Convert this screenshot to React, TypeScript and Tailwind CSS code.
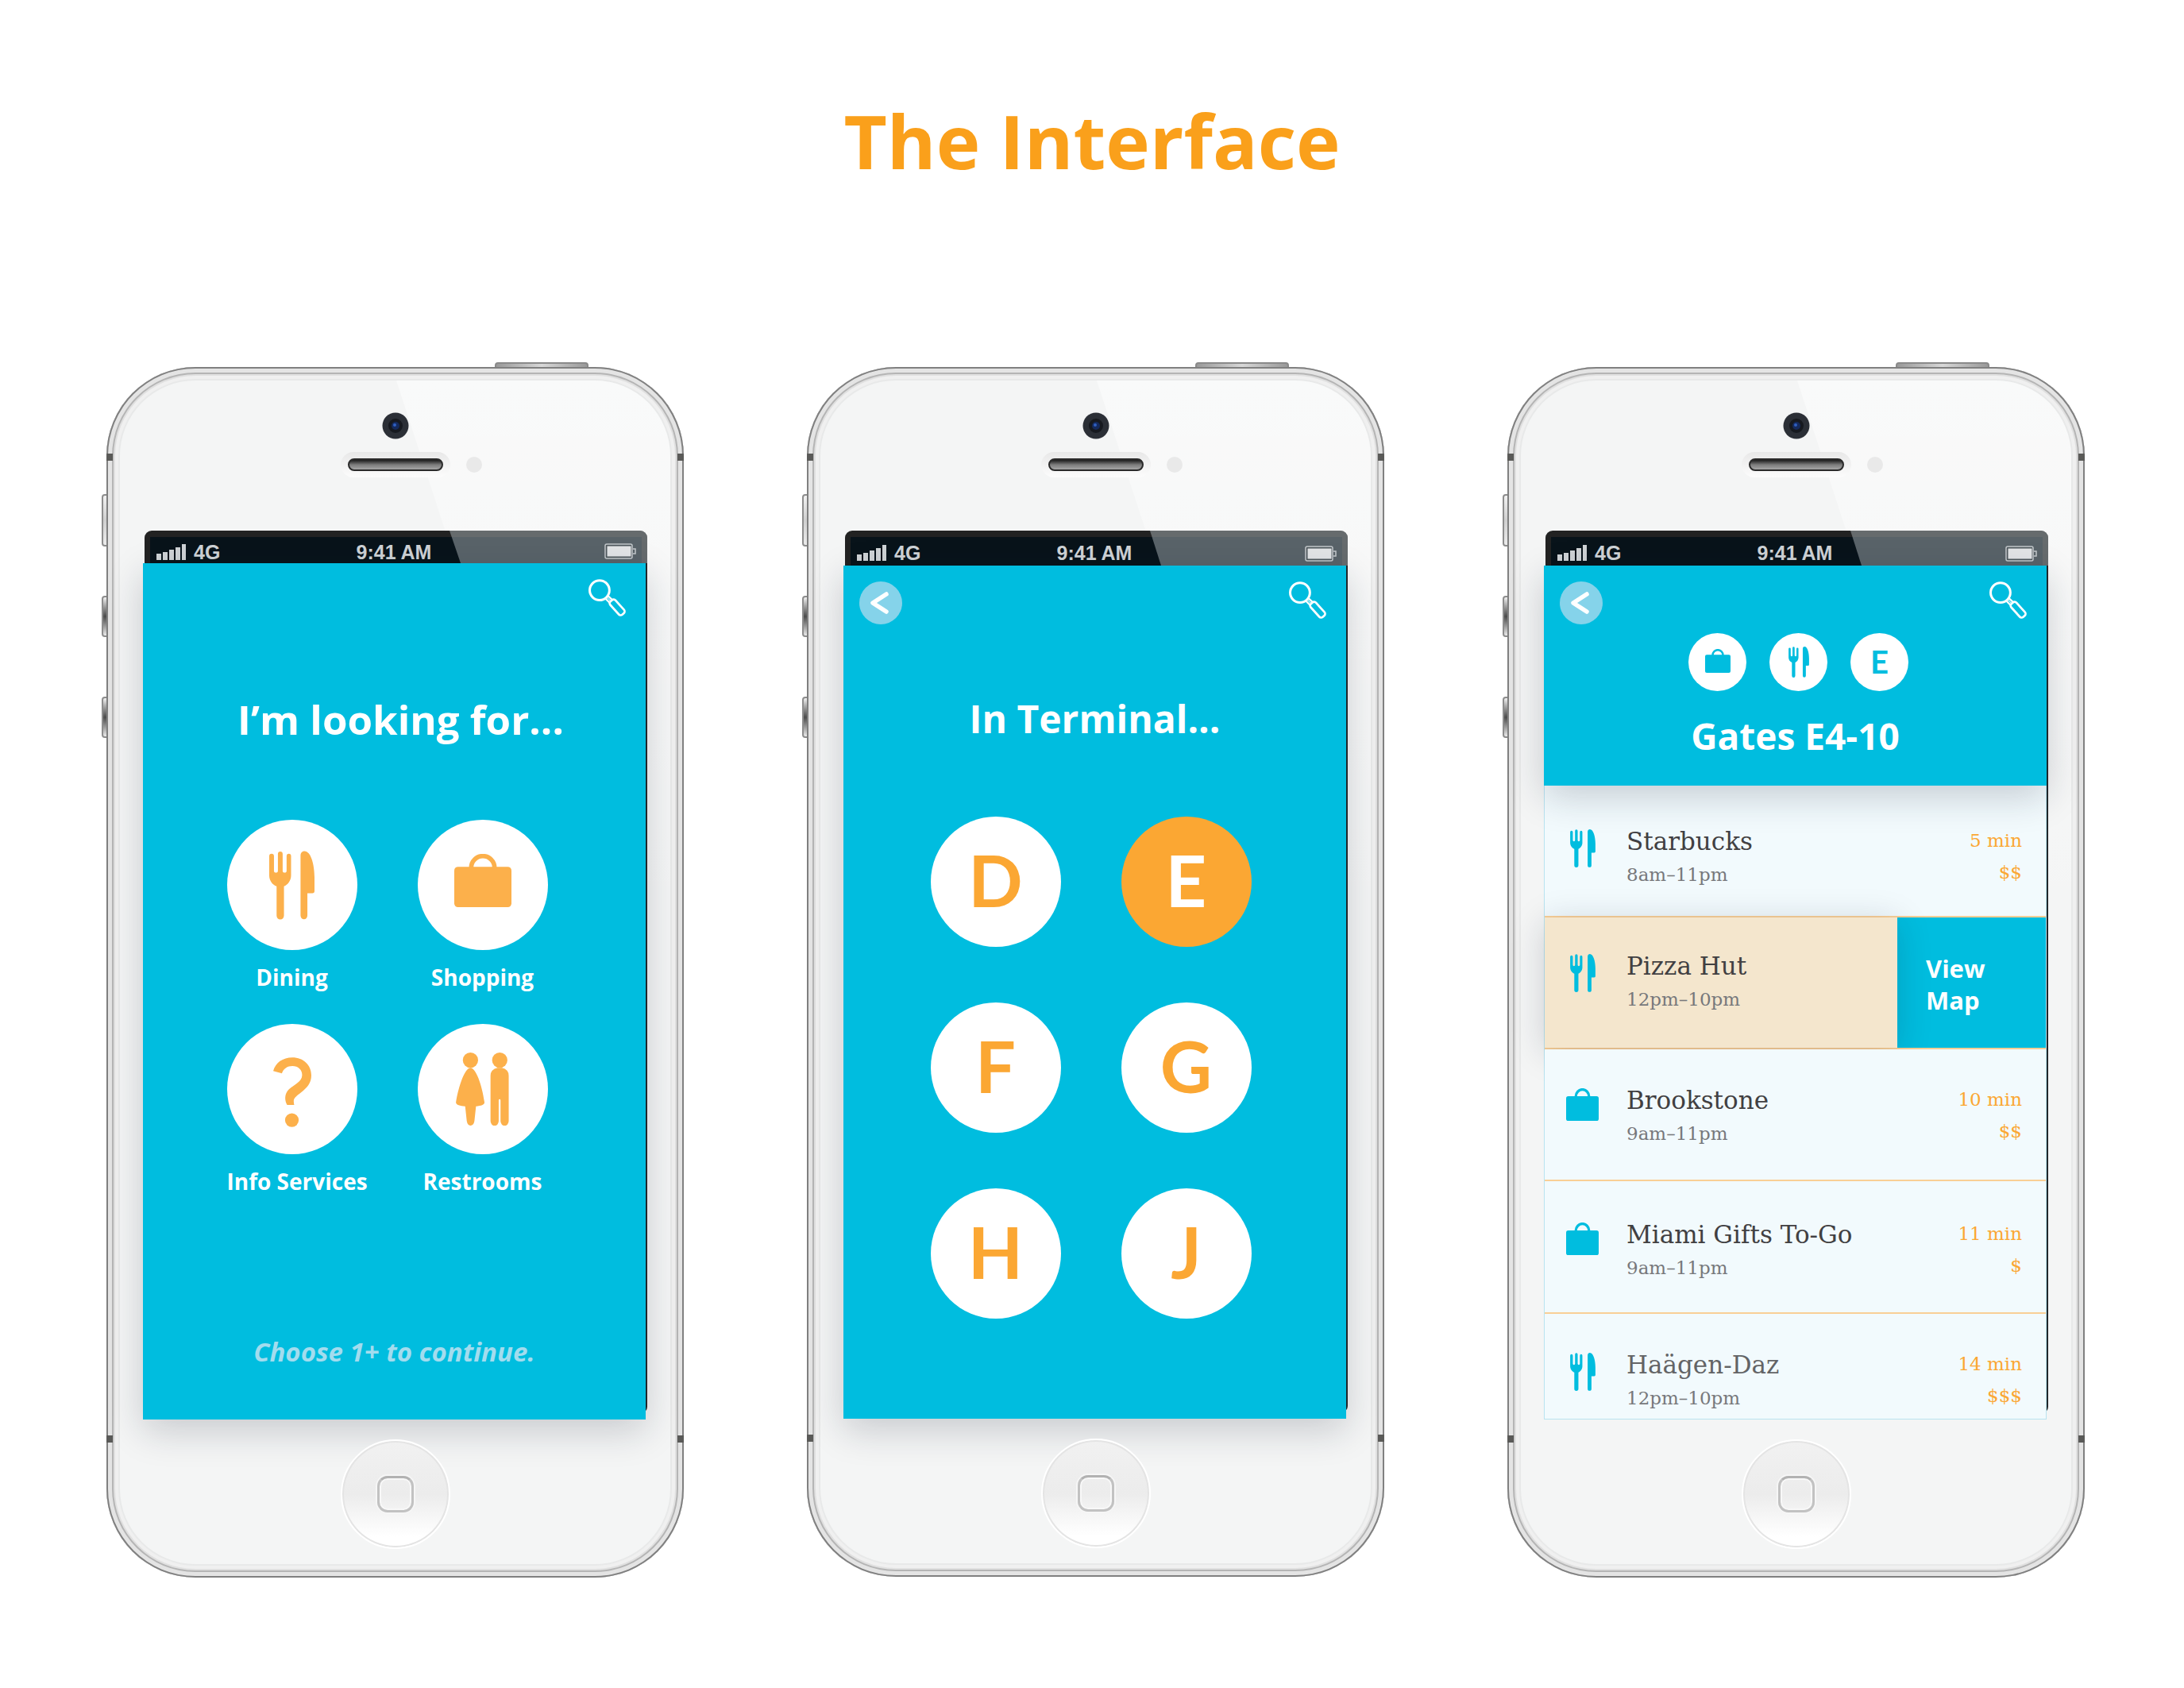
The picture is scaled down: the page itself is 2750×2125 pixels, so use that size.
import type { ReactNode } from "react";

function ForkKnife({ className }: { className: string }) {
  return (
    <svg viewBox="0 0 172 260" fill="currentColor" className={className} aria-hidden="true">
      <path d="M0 19a9 9 0 0 1 18 0V74a7.500 8 0 0 0 15 0V11a9 9 0 0 1 18 0V74a7.500 8 0 0 0 15 0V19a8.500 9 0 0 1 17 0V92C83 112 70 128 56 134V245a14 15 0 0 1-28 0V134C13 128 0 112 0 92Z" />
      <path d="M119 17C119 5 127 0 134 0C158 0 172 50 172 100V152q0 8-8 8H145V245a13 14 0 0 1-26 0Z" />
    </svg>
  );
}

function Bag({ className }: { className: string }) {
  return (
    <svg viewBox="0 0 216 202" preserveAspectRatio="none" className={className} aria-hidden="true">
      <rect y="49" width="216" height="153" rx="14" fill="currentColor" />
      <path d="M64 54V52A44 44 0 0 1 152 52V54" fill="none" stroke="currentColor" strokeWidth="17" />
    </svg>
  );
}

function Question({ className }: { className: string }) {
  return (
    <svg viewBox="0 0 145 264" fill="currentColor" className={className} aria-hidden="true">
      <path d="M0 51C9 20 36 0 73 0C115 0 145 29 145 68C145 96 130 114 106 133C88 147 78 154 78 166Q78 173 80 180H53C43 164 42 138 60 121C82 101 110 91 110 66C110 46 95 32 73 32C54 32 39 42 33 60Z" />
      <circle cx="71" cy="238" r="26" />
    </svg>
  );
}

function People({ className }: { className: string }) {
  return (
    <svg viewBox="0 0 201 277" fill="currentColor" className={className} aria-hidden="true">
      <circle cx="55" cy="29" r="29" />
      <path d="M55 58C76 60 98 120 108 188C109 199 96 202 76 204L70 260Q67 277 55 277Q44 277 41 260L35 204C15 202-1 199 0 188C12 120 34 60 55 58Z" />
      <circle cx="166" cy="29" r="29" />
      <path d="M158 58H174Q200 64 200 88V260a15 17 0 0 1-31 0V181a3.500 4 0 0 0-7 0V260a15 17 0 0 1-31 0V88Q131 64 158 58Z" />
    </svg>
  );
}

function Magnifier() {
  return (
    <svg viewBox="0 0 139 140" fill="none" stroke="white" className="size-[47px]" aria-hidden="true">
      <circle cx="41" cy="42" r="37" strokeWidth="9" />
      <path d="M63 73L80 90M74 64L90 79" strokeWidth="7" />
      <path d="M70 70L84 84" strokeWidth="3" />
      <rect x="74" y="93" width="66" height="26" rx="9" strokeWidth="8" transform="rotate(48 107 106)" />
    </svg>
  );
}

function StatusBar({ heightClass }: { heightClass: string }) {
  return (
    <div className={`relative ml-[2px] flex overflow-hidden rounded-t-[9px] bg-[#222222] px-[7px] pt-[8px] ${heightClass}`}>
      <div className="grid flex-1 grid-cols-3 items-center bg-[#08131a] pt-[4px] pr-[13px] pl-2 font-['Liberation_Sans',sans-serif] text-[25px] leading-6 font-bold text-[#cfd3d6]">
        <div className="flex items-center gap-[10px]">
          <svg viewBox="0 0 37 20" fill="currentColor" className="h-5 w-[37px]" aria-hidden="true">
            <path d="M0 12H6V20H0ZM8 10H14V20H8ZM16 7H22V20H16ZM24 4H30V20H24ZM32 0H37V20H32Z" />
          </svg>
          <span>4G</span>
        </div>
        <span className="text-center">9:41 AM</span>
      </div>
      <div className="absolute inset-y-0 right-0 w-[249px] bg-[#aab3b8]/50 [clip-path:polygon(0_0,100%_0,100%_100%,14px_100%)]" />
      <svg viewBox="0 0 41 20" className="absolute right-[13px] bottom-[5px] h-5 w-[41px]" aria-hidden="true">
        <rect x="1" y="1" width="34" height="18" rx="2" fill="#4f585d" stroke="#c4c9cc" strokeWidth="1.500" />
        <rect x="3.500" y="3.500" width="30" height="13" fill="#e3e5e7" />
        <path d="M36 7H39V13H36" fill="none" stroke="#c4c9cc" strokeWidth="1.500" />
      </svg>
    </div>
  );
}

function SideButton({ className }: { className: string }) {
  return (
    <div
      className={`absolute -left-[6px] w-[8px] rounded-l-[4px] border-2 border-[#8d8d8d] ${className}`}
    />
  );
}

function Phone({ statusClass, children }: { statusClass: string; children: ReactNode }) {
  return (
    <section className="relative">
      <SideButton className="top-[160px] h-[66px] bg-linear-to-b from-[#f2f2f2] via-[#cfcfcf] to-[#ececec]" />
      <SideButton className="top-[288px] h-[52px] bg-linear-to-b from-[#f2f2f2] via-[#4d4d4d] to-[#ececec]" />
      <SideButton className="top-[415px] h-[52px] bg-linear-to-b from-[#f2f2f2] via-[#4d4d4d] to-[#ececec]" />
      <div className="absolute -top-[6px] right-[120px] h-[8px] w-[118px] rounded-t-[4px] border-2 border-[#8a8a8a] bg-linear-to-r from-[#999999] via-[#d8d8d8] to-[#999999]" />

      <div className="relative flex flex-col overflow-hidden rounded-[112px] bg-[#f4f5f5] px-[46px] shadow-[inset_0_0_0_2px_#808080,inset_0_0_0_7px_#e4e4e4,inset_0_0_0_9px_#b5b5b5,inset_0_0_0_11px_#e0e0e0,inset_0_0_0_15px_#f0f0f0,inset_0_0_0_17px_#e8e9e9]">
        <div className="absolute top-[17px] right-[17px] h-[700px] w-[345px] rounded-tr-[95px] bg-linear-to-b from-white/50 to-white/0 [clip-path:polygon(0_0,100%_0,100%_100%,228px_100%)]" />
        <div className="absolute top-[109px] left-0 h-[9px] w-[8px] bg-[#5a5a58]" />
        <div className="absolute top-[109px] right-0 h-[9px] w-[8px] bg-[#5a5a58]" />
        <div className="absolute bottom-[170px] left-0 h-[9px] w-[8px] bg-[#5a5a58]" />
        <div className="absolute right-0 bottom-[170px] h-[9px] w-[8px] bg-[#5a5a58]" />

        <div className="relative flex h-[206px] flex-col items-center pt-[57px]">
          <svg viewBox="0 0 34 34" className="size-[34px]" aria-hidden="true">
            <circle cx="17" cy="17" r="16.500" fill="#2b2f36" />
            <circle cx="17" cy="17" r="9" fill="#16191f" />
            <circle cx="17" cy="17" r="5" fill="#152a5c" />
            <circle cx="16" cy="16" r="2" fill="#2f5fc0" />
          </svg>
          <div className="mt-[16px] grid w-full grid-cols-[1fr_138px_1fr] items-center">
            <div className="col-start-2 rounded-full bg-linear-to-b from-[#e8e8e8] to-[#fcfcfc] px-[9px] py-[8px]">
              <div className="h-4 rounded-full border-2 border-[#2a2a2a] bg-linear-to-b from-[#1d1d1d] via-[#7c7c7c] to-[#a5a5a5]" />
            </div>
            <div className="ml-[20px] size-5 rounded-full bg-[#e9e9e9]" />
          </div>
        </div>

        <div className="relative">
          <div className="absolute top-4 right-0 bottom-2 left-[2px] rounded-b-[8px] bg-[#20272a]" />
          <StatusBar heightClass={statusClass} />
          <div className="relative mr-[2px]">{children}</div>
        </div>

        <div className="relative flex h-[199px] justify-center pt-[25px]">
          <button
            type="button"
            aria-label="Home"
            className="flex size-[138px] items-center justify-center rounded-full border-2 border-white bg-linear-to-b from-[#f1f1f1] from-0% via-[#ececec] via-50% to-white to-90% shadow-[inset_0_0_0_2px_#e4e4e4]"
          >
            <span className="size-[46px] rounded-[13px] border-[3px] border-[#c2c2c2] border-t-[#b2b2b2] shadow-[0_0_0_2px_#f6f6f6,inset_0_0_0_2px_#f8f8f8]" />
          </button>
        </div>
      </div>
    </section>
  );
}

function Toolbar({ back }: { back?: boolean }) {
  return (
    <div className="flex h-[74px] items-start justify-between px-[20px] pt-[20px]">
      {back ? (
        <button type="button" aria-label="Back" className="size-[54px] rounded-full bg-[#85d3ea]">
          <svg viewBox="0 0 54 54" fill="none" stroke="white" className="size-full" aria-hidden="true">
            <path d="M34 16L17 27L34 38" strokeWidth="5.500" strokeLinecap="round" strokeLinejoin="round" />
          </svg>
        </button>
      ) : (
        <span />
      )}
      <button type="button" aria-label="Search" className="mr-[5px]">
        <Magnifier />
      </button>
    </div>
  );
}

const panelShadow = "shadow-[0_14px_44px_rgba(20,30,50,0.2)]";

const categories = [
  { label: "Dining", icon: <ForkKnife className="h-[87px] w-[57px]" /> },
  { label: "Shopping", icon: <Bag className="mb-3 h-[67px] w-[72px]" /> },
  { label: "Info Services", icon: <Question className="mt-2 h-[88px] w-[48px]" /> },
  { label: "Restrooms", icon: <People className="h-[92px] w-[67px]" /> },
];

function CategoryScreen() {
  return (
    <div className={`flex flex-col bg-[#00bddf] pb-[70px] text-white ${panelShadow}`}>
      <Toolbar />
      <h2 className="mt-[97px] pl-4 text-center text-[51px] leading-[50px] font-bold">I’m looking for...</h2>
      <div className="mt-[102px] grid grid-cols-[164px_164px] justify-center gap-x-[76px] gap-y-[45px] pr-[18px]">
        {categories.map(({ label, icon }) => (
          <button key={label} type="button" className="flex flex-col [align-items:safe_center]">
            <span className="flex size-[164px] items-center justify-center rounded-full bg-white text-[#fcb04b]">
              {icon}
            </span>
            <span className="mt-[20px] text-[28px] leading-7 font-bold whitespace-nowrap">{label}</span>
          </button>
        ))}
      </div>
      <p className="mt-[186px] text-center text-[33px] leading-[30px] font-bold text-[#a3dcee] italic">
        Choose 1+ to continue.
      </p>
    </div>
  );
}

function TerminalScreen() {
  return (
    <div className={`flex flex-col bg-[#00bddf] pb-[126px] text-white ${panelShadow}`}>
      <Toolbar back />
      <h2 className="mt-[95px] text-center text-[48px] leading-[48px] font-bold">In Terminal...</h2>
      <div className="mt-[99px] grid grid-cols-[164px_164px] justify-center gap-x-[76px] gap-y-[70px] pr-[10px]">
        {["D", "E", "F", "G", "H", "J"].map((letter) => (
          <button
            key={letter}
            type="button"
            aria-pressed={letter === "E"}
            className="size-[164px] rounded-full bg-white pb-[6px] font-['Lato',sans-serif] text-[90px] leading-none font-bold text-[#fba733] aria-pressed:bg-[#fba733] aria-pressed:text-white"
          >
            {letter}
          </button>
        ))}
      </div>
    </div>
  );
}

type Place = {
  name: string;
  hours: string;
  kind: "food" | "shop";
  wait?: string;
  price?: string;
  rowClass: string;
  nameClass: string;
};

const places: Place[] = [
  { name: "Starbucks", hours: "8am–11pm", kind: "food", wait: "5 min", price: "$$", rowClass: "h-[166px] pt-[50px]", nameClass: "text-[#414042]" },
  { name: "Pizza Hut", hours: "12pm–10pm", kind: "food", rowClass: "h-[164px] pt-[41px]", nameClass: "text-[#414042]" },
  { name: "Brookstone", hours: "9am–11pm", kind: "shop", wait: "10 min", price: "$$", rowClass: "h-[166px] pt-[44px]", nameClass: "text-[#414042]" },
  { name: "Miami Gifts To-Go", hours: "9am–11pm", kind: "shop", wait: "11 min", price: "$", rowClass: "h-[167px] pt-[47px]", nameClass: "text-[#414042]" },
  { name: "Haägen-Daz", hours: "12pm–10pm", kind: "food", wait: "14 min", price: "$$$", rowClass: "h-[132px] pt-[44px]", nameClass: "text-[#636466]" },
];

function PlaceSummary({ place }: { place: Place }) {
  return (
    <>
      <div className="flex w-[103px] justify-start pt-[5px] pl-[27px] text-[#00bddf]">
        <div className="flex w-[41px] justify-center">
          {place.kind === "food" ? <ForkKnife className="h-[48px] w-[32px]" /> : <Bag className="size-[41px]" />}
        </div>
      </div>
      <div className="flex-1">
        <h3 className={`text-[31px] leading-10 ${place.nameClass}`}>{place.name}</h3>
        <p className="mt-[2px] text-[23px] leading-10 text-[#77787b]">{place.hours}</p>
      </div>
    </>
  );
}

function ResultsScreen() {
  return (
    <div className="flex flex-col">
      <header className={`relative z-10 bg-[#00bddf] pb-[40px] text-white ${panelShadow}`}>
        <Toolbar back />
        <div className="mt-[11px] flex items-center justify-center gap-[29px] pl-2 text-[#00bddf]">
          <span className="flex size-[73px] items-center justify-center rounded-full bg-white">
            <Bag className="mb-1 h-[30px] w-8" />
          </span>
          <span className="flex size-[73px] items-center justify-center rounded-full bg-white">
            <ForkKnife className="h-[39px] w-[26px]" />
          </span>
          <span className="flex size-[73px] items-center justify-center rounded-full bg-white pb-[2px] font-['Lato',sans-serif] text-[40px] leading-none font-bold">
            E
          </span>
        </div>
        <h2 className="mt-[33px] text-center text-[46px] leading-[46px] font-bold">Gates E4-10</h2>
      </header>
      <ul className="border border-t-0 border-[#b9e3f0] bg-[#f2fafd] font-['DejaVu_Serif',serif]">
        {places.map((place) =>
          place.wait ? (
            <li key={place.name} className={`relative flex border-[#f9cf96] bg-[#f2fafd] not-last:border-b-2 ${place.rowClass}`}>
              <PlaceSummary place={place} />
              <div className="-mt-px pr-[30px] text-right text-[23px] leading-10 text-[#fba733]">
                <p>{place.wait}</p>
                <p>{place.price}</p>
              </div>
            </li>
          ) : (
            <li key={place.name} className="relative flex border-b-2 border-[#f9cf96] bg-[#00bddf]">
              <div className={`flex flex-1 bg-[#f4e6cd] shadow-[0_6px_40px_rgba(20,30,50,0.18)] ${place.rowClass}`}>
                <PlaceSummary place={place} />
              </div>
              <button
                type="button"
                className="w-[187px] pt-1 pr-20 pl-9 text-left font-['Open_Sans',sans-serif] text-[31px] leading-10 font-bold text-white"
              >
                View Map
              </button>
            </li>
          ),
        )}
      </ul>
    </div>
  );
}

export default function App() {
  return (
    <main className="min-h-screen bg-white pt-[130px] pb-[140px] font-['Open_Sans','Noto_Sans',sans-serif]">
      <h1 className="text-center text-[94px] leading-[94px] font-bold text-[#faa01b]">The Interface</h1>
      <div className="mt-[238px] grid grid-cols-3 gap-x-[155px] pr-[125px] pl-[134px]">
        <Phone statusClass="h-[41px]">
          <CategoryScreen />
        </Phone>
        <Phone statusClass="h-[44px]">
          <TerminalScreen />
        </Phone>
        <Phone statusClass="h-[44px]">
          <ResultsScreen />
        </Phone>
      </div>
    </main>
  );
}
